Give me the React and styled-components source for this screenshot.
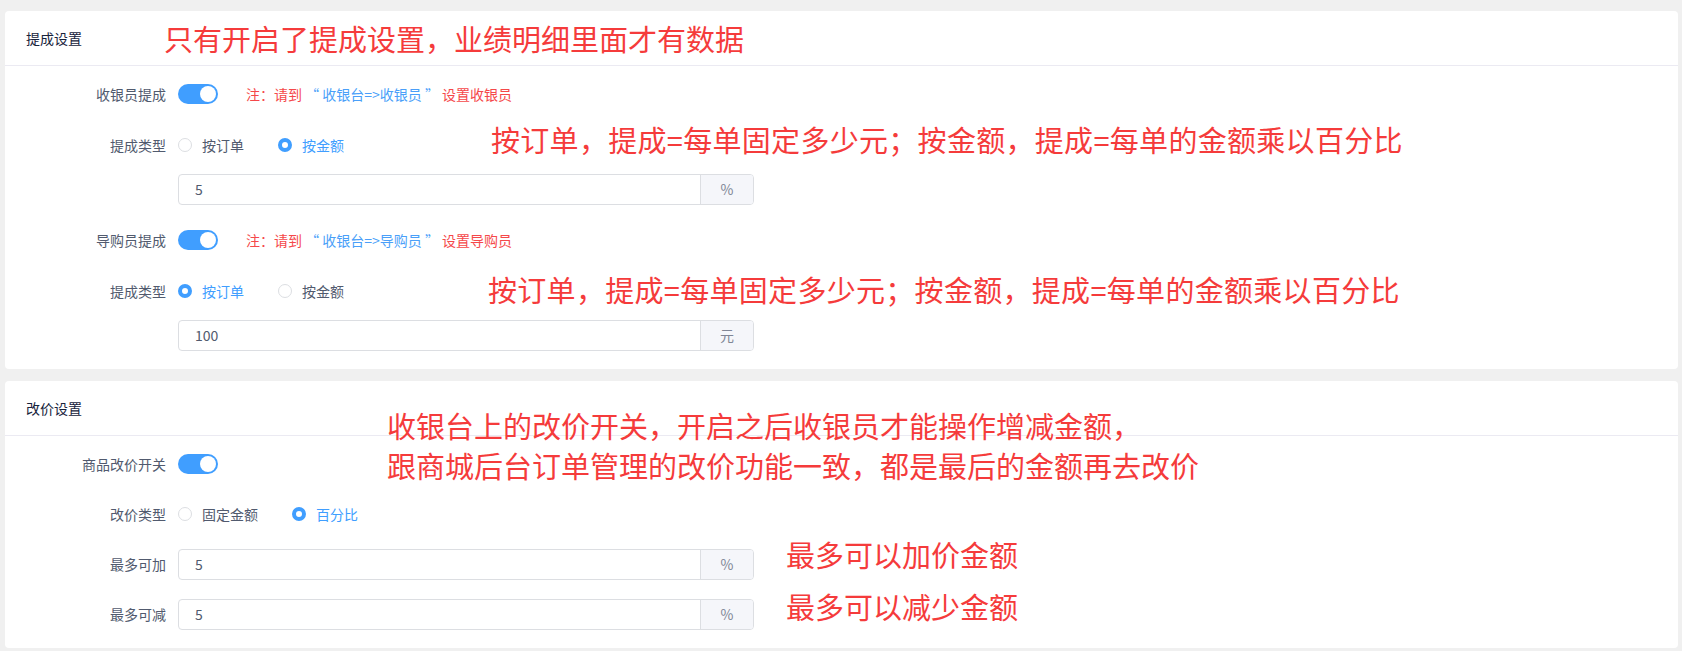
import React from "react";
import styled, { createGlobalStyle } from "styled-components";

const GlobalStyle = createGlobalStyle`
  html, body {
    margin: 0;
    padding: 0;
    background: #f0f0f0;
  }
  body {
    font-family: "Noto Sans CJK SC", "Noto Sans", sans-serif;
  }
`;

const Page = styled.div`
  position: relative;
  padding: 11px 4px 0 5px;
  display: flex;
  flex-direction: column;
  gap: 12px;
`;

const Card = styled.section`
  background: #fff;
  border-radius: 4px;
`;

const CardHead = styled.div`
  height: 54px;
  border-bottom: 1px solid #ebeaf2;
  display: flex;
  align-items: center;
  padding-left: 21px;
  font-size: 14px;
  color: #17233c;
`;

const CardBody = styled.div`
  display: flex;
  flex-direction: column;
  gap: ${p => p.$gap}px;
  padding: 12px 0 18px;
`;

const Row = styled.div`
  display: flex;
  align-items: center;
  min-height: 32px;
  margin-top: ${p => (p.$tight ? "-7px" : "0")};
`;

const Label = styled.div`
  flex-shrink: 0;
  width: 161px;
  margin-right: 12px;
  text-align: right;
  font-size: 14px;
  color: #515a6e;
`;

const Switch = styled.span`
  position: relative;
  display: inline-block;
  width: 40px;
  height: 20px;
  border-radius: 10px;
  background: #409eff;

  &::after {
    content: "";
    position: absolute;
    top: 2px;
    right: 2px;
    width: 16px;
    height: 16px;
    border-radius: 50%;
    background: #fff;
  }
`;

const Note = styled.span`
  margin-left: 28px;
  font-size: 14px;
  color: #f5484a;
  white-space: pre;

  em {
    font-style: normal;
    color: #4a9ff9;
  }
`;

const RadioOption = styled.span`
  display: inline-flex;
  align-items: center;
  gap: 10px;
  margin-right: 34px;
  font-size: 14px;
  color: ${p => (p.$checked ? "#409eff" : "#515a6e")};
`;

const RadioDot = styled.span`
  box-sizing: border-box;
  width: 14px;
  height: 14px;
  border-radius: 50%;
  background: #fff;
  border: ${p => (p.$checked ? "4px solid #409eff" : "1px solid #dcdee2")};
`;

const InputGroup = styled.div`
  box-sizing: border-box;
  display: flex;
  width: 576px;
  height: 31px;
  border: 1px solid #dcdee2;
  border-radius: 4px;
  overflow: hidden;
`;

const Field = styled.input`
  flex: 1;
  min-width: 0;
  border: 0;
  outline: 0;
  padding: 0 0 0 16px;
  font-family: inherit;
  font-size: 14px;
  color: #515a6e;
  background: transparent;
`;

const Append = styled.div`
  width: 52px;
  border-left: 1px solid #dcdee2;
  background: #f5f6fa;
  color: #808695;
  font-size: 14px;
  display: flex;
  align-items: center;
  justify-content: center;
`;

const Callout = styled.div`
  position: absolute;
  left: ${p => p.$x}px;
  top: ${p => p.$y}px;
  font-size: 29px;
  letter-spacing: ${p => p.$spacing || 0}px;
  line-height: 40px;
  color: #f53b3b;
  white-space: nowrap;
`;

const Radios = ({ options, value }) => (
  <>
    {options.map(o => (
      <RadioOption key={o} $checked={o === value}>
        <RadioDot $checked={o === value} />
        {o}
      </RadioOption>
    ))}
  </>
);

const NumberInput = ({ value, unit }) => (
  <InputGroup>
    <Field defaultValue={value} readOnly />
    <Append>{unit}</Append>
  </InputGroup>
);

const App = () => {
  return (
    <>
      <GlobalStyle />
      <Page>
        <Card>
          <CardHead>提成设置</CardHead>
          <CardBody $gap={19}>
            <Row>
              <Label>收银员提成</Label>
              <Switch />
              <Note>
                注：请到 <em>“ 收银台=&gt;收银员 ”</em> 设置收银员
              </Note>
            </Row>
            <Row>
              <Label>提成类型</Label>
              <Radios options={["按订单", "按金额"]} value="按金额" />
            </Row>
            <Row $tight>
              <Label />
              <NumberInput value="5" unit="%" />
            </Row>
            <Row>
              <Label>导购员提成</Label>
              <Switch />
              <Note>
                注：请到 <em>“ 收银台=&gt;导购员 ”</em> 设置导购员
              </Note>
            </Row>
            <Row>
              <Label>提成类型</Label>
              <Radios options={["按订单", "按金额"]} value="按订单" />
            </Row>
            <Row $tight>
              <Label />
              <NumberInput value="100" unit="元" />
            </Row>
          </CardBody>
        </Card>

        <Card>
          <CardHead>改价设置</CardHead>
          <CardBody $gap={18}>
            <Row>
              <Label>商品改价开关</Label>
              <Switch />
            </Row>
            <Row>
              <Label>改价类型</Label>
              <Radios options={["固定金额", "百分比"]} value="百分比" />
            </Row>
            <Row>
              <Label>最多可加</Label>
              <NumberInput value="5" unit="%" />
            </Row>
            <Row>
              <Label>最多可减</Label>
              <NumberInput value="5" unit="%" />
            </Row>
          </CardBody>
        </Card>

        <Callout $x={164} $y={18}>
          只有开启了提成设置，业绩明细里面才有数据
        </Callout>
        <Callout $x={491} $y={119} $spacing={0.3}>
          按订单，提成=每单固定多少元；按金额，提成=每单的金额乘以百分比
        </Callout>
        <Callout $x={488} $y={269} $spacing={0.3}>
          按订单，提成=每单固定多少元；按金额，提成=每单的金额乘以百分比
        </Callout>
        <Callout $x={387} $y={405}>
          收银台上的改价开关，开启之后收银员才能操作增减金额，
          <br />
          跟商城后台订单管理的改价功能一致，都是最后的金额再去改价
        </Callout>
        <Callout $x={786} $y={534}>最多可以加价金额</Callout>
        <Callout $x={786} $y={586}>最多可以减少金额</Callout>
      </Page>
    </>
  );
};

export default App;
